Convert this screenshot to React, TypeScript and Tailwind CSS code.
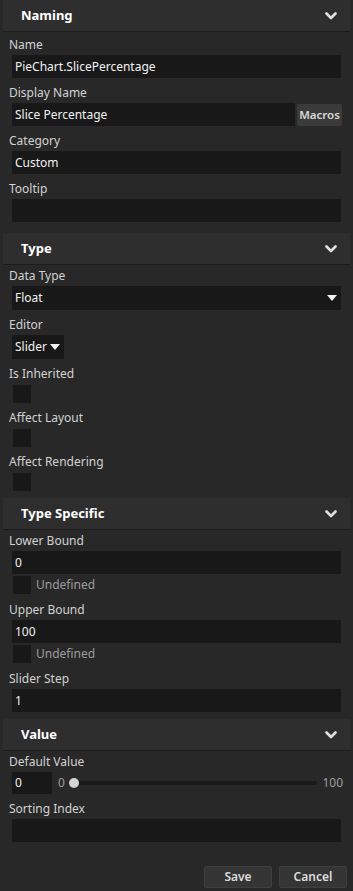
import React from "react";

const font = { fontFamily: '"Noto Sans", "Open Sans", sans-serif' };

function Chevron() {
  return (
    <svg width="12" height="8" viewBox="0 0 12 8" className="mr-[13px]">
      <polyline points="1.5,1.5 6,6 10.5,1.5" fill="none" stroke="#e0e0e0" strokeWidth="2.6" strokeLinecap="round" strokeLinejoin="round" />
    </svg>
  );
}

function Caret() {
  return (
    <svg width="10" height="6" viewBox="0 0 10 6">
      <polygon points="0,0 10,0 5,6" fill="#f0f0f0" />
    </svg>
  );
}

function Header({ title }: { title: string }) {
  return (
    <div className="mx-[3px] flex h-[32px] items-center justify-between border-b border-[#1c1c1c] bg-[#2e2e2e]">
      <span className="pl-[18px] text-[13px] font-bold text-white">{title}</span>
      <Chevron />
    </div>
  );
}

function Label({ text }: { text: string }) {
  return <div className="h-[21px] pl-[9px] text-[12px] leading-[21px] text-[#d2d2d2]">{text}</div>;
}

function Input({ value = "" }: { value?: string }) {
  return (
    <div className="mx-[12px] mb-[4px] flex h-[23px] items-center bg-[#181818] pl-[3px] text-[12px] text-[#f2f2f2]">
      {value}
    </div>
  );
}

function Check() {
  return <div className="ml-[13px] h-[18px] w-[18px] bg-[#181818]" />;
}

function CheckField({ label }: { label: string }) {
  return (
    <div>
      <Label text={label} />
      <div className="mb-[4px] pt-[1px]">
        <Check />
      </div>
    </div>
  );
}

function Undefined() {
  return (
    <div className="mb-[5px] mt-[-2px] flex items-center">
      <Check />
      <span className="ml-[5px] text-[12px] text-[#9c9c9c]">Undefined</span>
    </div>
  );
}

export default function App() {
  return (
    <div className="h-[891px] w-[353px] bg-[#282828]" style={font}>
      <Header title="Naming" />
      <div className="pt-[2px] pb-[7px]">
        <Label text="Name" />
        <Input value="PieChart.SlicePercentage" />
        <Label text="Display Name" />
        <div className="mb-[4px] ml-[12px] mr-[11px] flex h-[23px] items-center gap-[2px]">
          <div className="flex h-full flex-1 items-center bg-[#181818] pl-[3px] text-[12px] text-[#f2f2f2]">
            Slice Percentage
          </div>
          <div className="flex h-[22px] w-[45px] items-center justify-center rounded-[2px] bg-[#3a3a3a] text-[11.5px] font-semibold text-[#d8d8d8]">
            Macros
          </div>
        </div>
        <Label text="Category" />
        <Input value="Custom" />
        <Label text="Tooltip" />
        <Input />
      </div>

      <Header title="Type" />
      <div className="pb-[3px]">
        <Label text="Data Type" />
        <div className="mx-[12px] mb-[4px] flex h-[24px] items-center justify-between bg-[#181818] pl-[3px] pr-[4px] text-[12px] text-[#f2f2f2]">
          <span>Float</span>
          <Caret />
        </div>
        <Label text="Editor" />
        <div className="mb-[4px] ml-[12px] flex h-[24px] w-[52px] items-center justify-between bg-[#181818] pl-[3px] pr-[4px] text-[12px] text-[#f2f2f2]">
          <span>Slider</span>
          <Caret />
        </div>
        <CheckField label="Is Inherited" />
        <CheckField label="Affect Layout" />
        <CheckField label="Affect Rendering" />
      </div>

      <Header title="Type Specific" />
      <div className="pb-[3px]">
        <Label text="Lower Bound" />
        <Input value="0" />
        <Undefined />
        <Label text="Upper Bound" />
        <Input value="100" />
        <Undefined />
        <Label text="Slider Step" />
        <Input value="1" />
      </div>

      <Header title="Value" />
      <div>
        <Label text="Default Value" />
        <div className="mb-[4px] ml-[12px] mr-[10px] flex h-[22px] items-center">
          <div className="flex h-full w-[40px] items-center bg-[#181818] pl-[3px] text-[12px] text-[#f2f2f2]">0</div>
          <span className="ml-[6px] text-[12px] text-[#9c9c9c]">0</span>
          <div className="relative ml-[4px] flex h-full flex-1 items-center">
            <div className="h-[4px] w-full rounded-full bg-[#1a1a1a]" />
            <div className="absolute left-0 top-1/2 h-[10px] w-[10px] -translate-y-1/2 rounded-full bg-[#d4d4d4]" />
          </div>
          <span className="ml-[5px] text-[12px] text-[#9c9c9c]">100</span>
        </div>
        <Label text="Sorting Index" />
        <Input />
      </div>

      <div className="mr-[6px] mt-[24px] flex justify-end gap-[7px]">
        <button className="h-[22px] w-[68px] rounded-[2px] border border-[#3e3e3e] bg-[#353535] text-[12px] font-semibold text-[#dcdcdc]">
          Save
        </button>
        <button className="h-[22px] w-[68px] rounded-[2px] border border-[#3e3e3e] bg-[#353535] text-[12px] font-semibold text-[#dcdcdc]">
          Cancel
        </button>
      </div>
    </div>
  );
}
